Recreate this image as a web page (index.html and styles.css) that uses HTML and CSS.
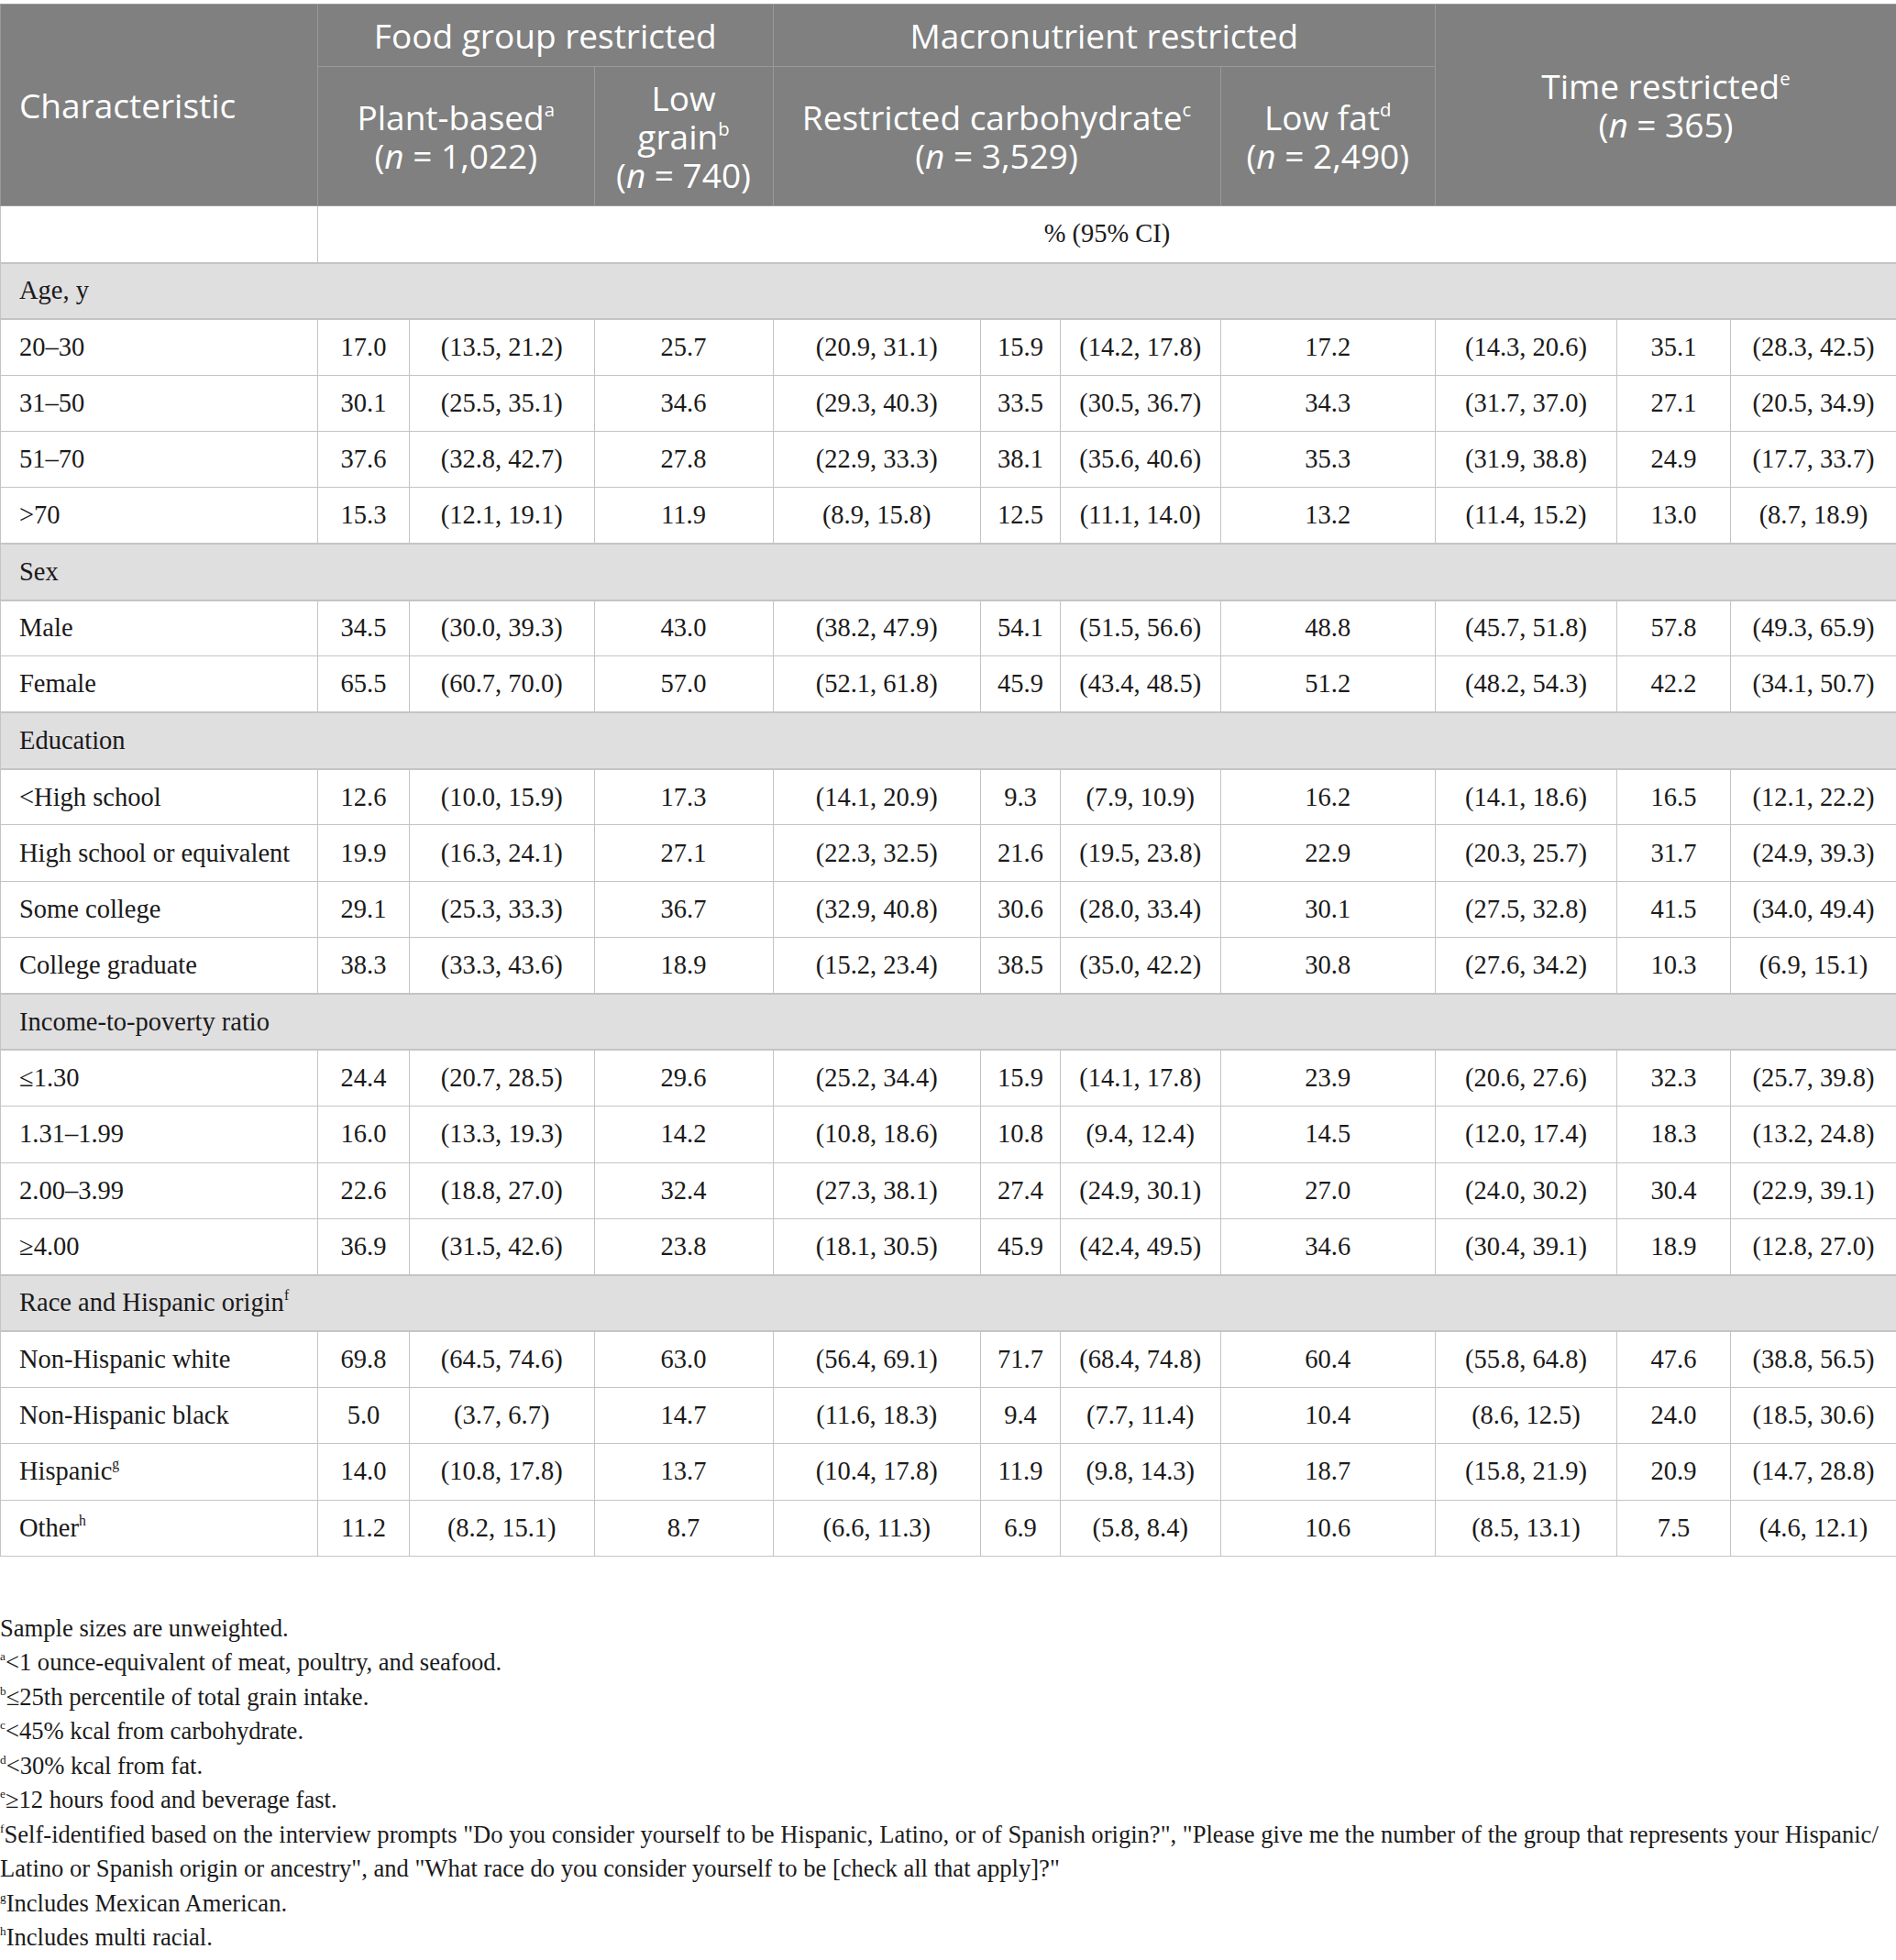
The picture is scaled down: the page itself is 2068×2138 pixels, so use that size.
FILE: index.html
```html
<!DOCTYPE html>
<html>
<head>
<meta http-equiv="Content-Type" content="text/html; charset=utf-8"/>
<title>Diet patterns by characteristic</title>
<link rel="stylesheet" href="styles.css">
</head>

<body>
<table class="data">
<colgroup>
<col style="width:346px"><col style="width:100px"><col style="width:201.5px"><col style="width:195px"><col style="width:226.5px"><col style="width:87px"><col style="width:174.5px"><col style="width:234.5px"><col style="width:198px"><col style="width:124px"><col style="width:181px">
</colgroup>
<thead>
<tr class="grp">
<th rowspan="2" class="lead">Characteristic</th>
<th colspan="3">Food group restricted</th>
<th colspan="4">Macronutrient restricted</th>
<th rowspan="2" colspan="3">Time restricted<sup>e</sup><br>(<i>n</i> = 365)</th>
</tr>
<tr class="sub">
<th colspan="2">Plant-based<sup>a</sup><br>(<i>n</i> = 1,022)</th>
<th>Low<br>grain<sup>b</sup><br>(<i>n</i> = 740)</th>
<th colspan="3">Restricted carbohydrate<sup>c</sup><br>(<i>n</i> = 3,529)</th>
<th>Low fat<sup>d</sup><br>(<i>n</i> = 2,490)</th>
</tr>
</thead>
<tbody>
<tr class="ci"><td></td><td colspan="10">% (95% CI)</td></tr>

<tr class="sect"><td colspan="11">Age, y</td></tr>
<tr><td>20–30</td><td>17.0</td><td>(13.5, 21.2)</td><td>25.7</td><td>(20.9, 31.1)</td><td>15.9</td><td>(14.2, 17.8)</td><td>17.2</td><td>(14.3, 20.6)</td><td>35.1</td><td>(28.3, 42.5)</td></tr>
<tr><td>31–50</td><td>30.1</td><td>(25.5, 35.1)</td><td>34.6</td><td>(29.3, 40.3)</td><td>33.5</td><td>(30.5, 36.7)</td><td>34.3</td><td>(31.7, 37.0)</td><td>27.1</td><td>(20.5, 34.9)</td></tr>
<tr><td>51–70</td><td>37.6</td><td>(32.8, 42.7)</td><td>27.8</td><td>(22.9, 33.3)</td><td>38.1</td><td>(35.6, 40.6)</td><td>35.3</td><td>(31.9, 38.8)</td><td>24.9</td><td>(17.7, 33.7)</td></tr>
<tr><td>&gt;70</td><td>15.3</td><td>(12.1, 19.1)</td><td>11.9</td><td>(8.9, 15.8)</td><td>12.5</td><td>(11.1, 14.0)</td><td>13.2</td><td>(11.4, 15.2)</td><td>13.0</td><td>(8.7, 18.9)</td></tr>

<tr class="sect"><td colspan="11">Sex</td></tr>
<tr><td>Male</td><td>34.5</td><td>(30.0, 39.3)</td><td>43.0</td><td>(38.2, 47.9)</td><td>54.1</td><td>(51.5, 56.6)</td><td>48.8</td><td>(45.7, 51.8)</td><td>57.8</td><td>(49.3, 65.9)</td></tr>
<tr><td>Female</td><td>65.5</td><td>(60.7, 70.0)</td><td>57.0</td><td>(52.1, 61.8)</td><td>45.9</td><td>(43.4, 48.5)</td><td>51.2</td><td>(48.2, 54.3)</td><td>42.2</td><td>(34.1, 50.7)</td></tr>

<tr class="sect"><td colspan="11">Education</td></tr>
<tr><td>&lt;High school</td><td>12.6</td><td>(10.0, 15.9)</td><td>17.3</td><td>(14.1, 20.9)</td><td>9.3</td><td>(7.9, 10.9)</td><td>16.2</td><td>(14.1, 18.6)</td><td>16.5</td><td>(12.1, 22.2)</td></tr>
<tr><td>High school or equivalent</td><td>19.9</td><td>(16.3, 24.1)</td><td>27.1</td><td>(22.3, 32.5)</td><td>21.6</td><td>(19.5, 23.8)</td><td>22.9</td><td>(20.3, 25.7)</td><td>31.7</td><td>(24.9, 39.3)</td></tr>
<tr><td>Some college</td><td>29.1</td><td>(25.3, 33.3)</td><td>36.7</td><td>(32.9, 40.8)</td><td>30.6</td><td>(28.0, 33.4)</td><td>30.1</td><td>(27.5, 32.8)</td><td>41.5</td><td>(34.0, 49.4)</td></tr>
<tr><td>College graduate</td><td>38.3</td><td>(33.3, 43.6)</td><td>18.9</td><td>(15.2, 23.4)</td><td>38.5</td><td>(35.0, 42.2)</td><td>30.8</td><td>(27.6, 34.2)</td><td>10.3</td><td>(6.9, 15.1)</td></tr>

<tr class="sect"><td colspan="11">Income-to-poverty ratio</td></tr>
<tr><td>≤1.30</td><td>24.4</td><td>(20.7, 28.5)</td><td>29.6</td><td>(25.2, 34.4)</td><td>15.9</td><td>(14.1, 17.8)</td><td>23.9</td><td>(20.6, 27.6)</td><td>32.3</td><td>(25.7, 39.8)</td></tr>
<tr><td>1.31–1.99</td><td>16.0</td><td>(13.3, 19.3)</td><td>14.2</td><td>(10.8, 18.6)</td><td>10.8</td><td>(9.4, 12.4)</td><td>14.5</td><td>(12.0, 17.4)</td><td>18.3</td><td>(13.2, 24.8)</td></tr>
<tr><td>2.00–3.99</td><td>22.6</td><td>(18.8, 27.0)</td><td>32.4</td><td>(27.3, 38.1)</td><td>27.4</td><td>(24.9, 30.1)</td><td>27.0</td><td>(24.0, 30.2)</td><td>30.4</td><td>(22.9, 39.1)</td></tr>
<tr><td>≥4.00</td><td>36.9</td><td>(31.5, 42.6)</td><td>23.8</td><td>(18.1, 30.5)</td><td>45.9</td><td>(42.4, 49.5)</td><td>34.6</td><td>(30.4, 39.1)</td><td>18.9</td><td>(12.8, 27.0)</td></tr>

<tr class="sect"><td colspan="11">Race and Hispanic origin<sup>f</sup></td></tr>
<tr><td>Non-Hispanic white</td><td>69.8</td><td>(64.5, 74.6)</td><td>63.0</td><td>(56.4, 69.1)</td><td>71.7</td><td>(68.4, 74.8)</td><td>60.4</td><td>(55.8, 64.8)</td><td>47.6</td><td>(38.8, 56.5)</td></tr>
<tr><td>Non-Hispanic black</td><td>5.0</td><td>(3.7, 6.7)</td><td>14.7</td><td>(11.6, 18.3)</td><td>9.4</td><td>(7.7, 11.4)</td><td>10.4</td><td>(8.6, 12.5)</td><td>24.0</td><td>(18.5, 30.6)</td></tr>
<tr><td>Hispanic<sup>g</sup></td><td>14.0</td><td>(10.8, 17.8)</td><td>13.7</td><td>(10.4, 17.8)</td><td>11.9</td><td>(9.8, 14.3)</td><td>18.7</td><td>(15.8, 21.9)</td><td>20.9</td><td>(14.7, 28.8)</td></tr>
<tr><td>Other<sup>h</sup></td><td>11.2</td><td>(8.2, 15.1)</td><td>8.7</td><td>(6.6, 11.3)</td><td>6.9</td><td>(5.8, 8.4)</td><td>10.6</td><td>(8.5, 13.1)</td><td>7.5</td><td>(4.6, 12.1)</td></tr>
</tbody>
</table>

<div class="notes">
<p>Sample sizes are unweighted.</p>
<p><sup>a</sup>&lt;1 ounce-equivalent of meat, poultry, and seafood.</p>
<p><sup>b</sup>≤25th percentile of total grain intake.</p>
<p><sup>c</sup>&lt;45% kcal from carbohydrate.</p>
<p><sup>d</sup>&lt;30% kcal from fat.</p>
<p><sup>e</sup>≥12 hours food and beverage fast.</p>
<p><sup>f</sup>Self-identified based on the interview prompts "Do you consider yourself to be Hispanic, Latino, or of Spanish origin?", "Please give me the number of the group that represents your Hispanic/<br>Latino or Spanish origin or ancestry", and "What race do you consider yourself to be [check all that apply]?"</p>
<p><sup>g</sup>Includes Mexican American.</p>
<p><sup>h</sup>Includes multi racial.</p>
</div>
</body>
</html>
```

FILE: styles.css
```css
body {
   margin: 0;
   padding-top: 4px;
   background-color: white;
   color: #1a1a1a;
   font-family: "Liberation Serif", "Times New Roman", serif;
}

table.data {
   width: 2068px;
   table-layout: fixed;
   border-collapse: collapse;
   font-size: 28.5px;
}

table.data th,
table.data td {
   border: 1px solid #c4c4c4;
   padding: 0 10px;
   text-align: center;
   vertical-align: middle;
   white-space: nowrap;
}

table.data thead th {
   background-color: #7f807f;
   border-color: #999a99;
   color: white;
   font-family: "Open Sans", "DejaVu Sans", sans-serif;
   font-weight: 400;
   font-size: 37px;
   line-height: 42px;
}

table.data thead tr.grp {
   height: 68px;
}

table.data thead tr.sub {
   height: 152px;
}

table.data thead th.lead {
   text-align: left;
   padding-left: 20px;
}

table.data sup {
   font-size: 0.55em;
   line-height: 0;
   vertical-align: 0.75em;
}

table.data tbody tr {
   height: 61.35px;
}

table.data tbody tr.ci {
   height: 62px;
}

table.data tbody td:first-child {
   text-align: left;
   padding-left: 20px;
}

table.data tr.sect td {
   background-color: #e0dfe0;
   border-top: 2px solid #c4c4c4;
   border-bottom: 2px solid #c4c4c4;
}

.notes {
   margin-top: 60px;
   font-size: 26.6px;
   line-height: 37.5px;
}

.notes p {
   margin: 0;
}

.notes sup {
   font-size: 0.5em;
   line-height: 0;
   vertical-align: 0.8em;
}
```
